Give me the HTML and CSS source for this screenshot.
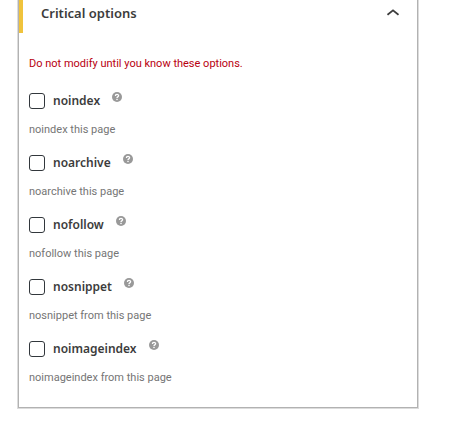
FILE: index.html
```
<!DOCTYPE html>
<html lang="en">
<head>
	<meta charset="UTF-8">
	<meta name="viewport" content="width=device-width, initial-scale=1">
	<title>Critical options</title>
	<link rel="stylesheet" href="styles.css">
</head>
<body>
	<!-- question mark icon, used by every option -->
	<svg class="defs" width="0" height="0" aria-hidden="true">
		<symbol id="help" viewBox="0 0 10 10">
			<circle cx="5" cy="5" r="5" fill="#999"/>
			<path d="M3.4 3.9C3.4 1.9 6.6 1.9 6.6 3.8C6.6 4.9 5 4.9 5 6" fill="none" stroke="#fff" stroke-width="1.3"/>
			<rect x="4.3" y="6.8" width="1.4" height="1.3" fill="#fff"/>
		</symbol>
	</svg>

	<section class="panel">
		<div class="panel-header">
			<h2>Critical options</h2>
			<button type="button" class="toggle" aria-label="Toggle panel">
				<svg width="12" height="7" viewBox="0 0 12 7"><path d="M0.5 5.8L6 1.4L11.5 5.8" fill="none" stroke="#3c3c3c" stroke-width="1.8"/></svg>
			</button>
		</div>
		<div class="panel-body">
			<p class="warning">Do not modify until you know these options.</p>

			<div class="option">
				<div class="option-row">
					<input type="checkbox" id="noindex">
					<label for="noindex">noindex</label>
					<svg class="help"><use href="#help"/></svg>
				</div>
				<p class="description">noindex this page</p>
			</div>
			<div class="option">
				<div class="option-row">
					<input type="checkbox" id="noarchive">
					<label for="noarchive">noarchive</label>
					<svg class="help"><use href="#help"/></svg>
				</div>
				<p class="description">noarchive this page</p>
			</div>
			<div class="option">
				<div class="option-row">
					<input type="checkbox" id="nofollow">
					<label for="nofollow">nofollow</label>
					<svg class="help"><use href="#help"/></svg>
				</div>
				<p class="description">nofollow this page</p>
			</div>
			<div class="option">
				<div class="option-row">
					<input type="checkbox" id="nosnippet">
					<label for="nosnippet">nosnippet</label>
					<svg class="help"><use href="#help"/></svg>
				</div>
				<p class="description">nosnippet from this page</p>
			</div>
			<div class="option">
				<div class="option-row">
					<input type="checkbox" id="noimageindex">
					<label for="noimageindex">noimageindex</label>
					<svg class="help"><use href="#help"/></svg>
				</div>
				<p class="description">noimageindex from this page</p>
			</div>
		</div>
	</section>
</body>
</html>
```
FILE: styles.css
```
*{
	box-sizing: border-box;
	margin: 0;
	padding: 0;
}

body{
	padding: 0 52px 16px 18px;
	background-color: #fff;
	font-family: Roboto, "Noto Sans", sans-serif;
	font-size: 11px;
	color: #3c3c3c;
}

.defs{
	display: block;
}

.panel{
	border: 1px solid #b2b2b2;
	border-top: none;
	box-shadow: 0 0 0 1px #dcdcdc;
}

/* header */
.panel-header{
	display: flex;
	align-items: flex-start;
	justify-content: space-between;
	height: 33px;
	padding: 4px 18px 0 18px;
	border-left: 4px solid #f0c33c;
}

.panel-header h2{
	font-family: "Noto Sans", sans-serif;
	font-size: 13px;
	font-weight: 600;
	line-height: 18px;
}

.toggle{
	display: flex;
	align-items: center;
	height: 16px;
	border: none;
	background: none;
	cursor: pointer;
}

/* body */
.panel-body{
	padding: 23px 10px 21px 10px;
}

.warning{
	margin-bottom: 20px;
	line-height: 16px;
	color: #b80010;
}

.option{
	margin-bottom: 16px;
}

.option:last-child{
	margin-bottom: 0;
}

.option-row{
	display: flex;
	align-items: center;
	height: 18px;
	margin-bottom: 12px;
}

.option-row input{
	appearance: none;
	width: 16px;
	height: 16px;
	margin-right: 8px;
	border: 1px solid #32373c;
	border-radius: 3px;
	background-color: #fff;
}

.option-row label{
	font-family: "Noto Sans", sans-serif;
	font-size: 12px;
	font-weight: 600;
	line-height: 18px;
}

.help{
	align-self: flex-start;
	width: 10px;
	height: 10px;
	margin-left: 12px;
}

.description{
	line-height: 16px;
	color: #757575;
}
```
